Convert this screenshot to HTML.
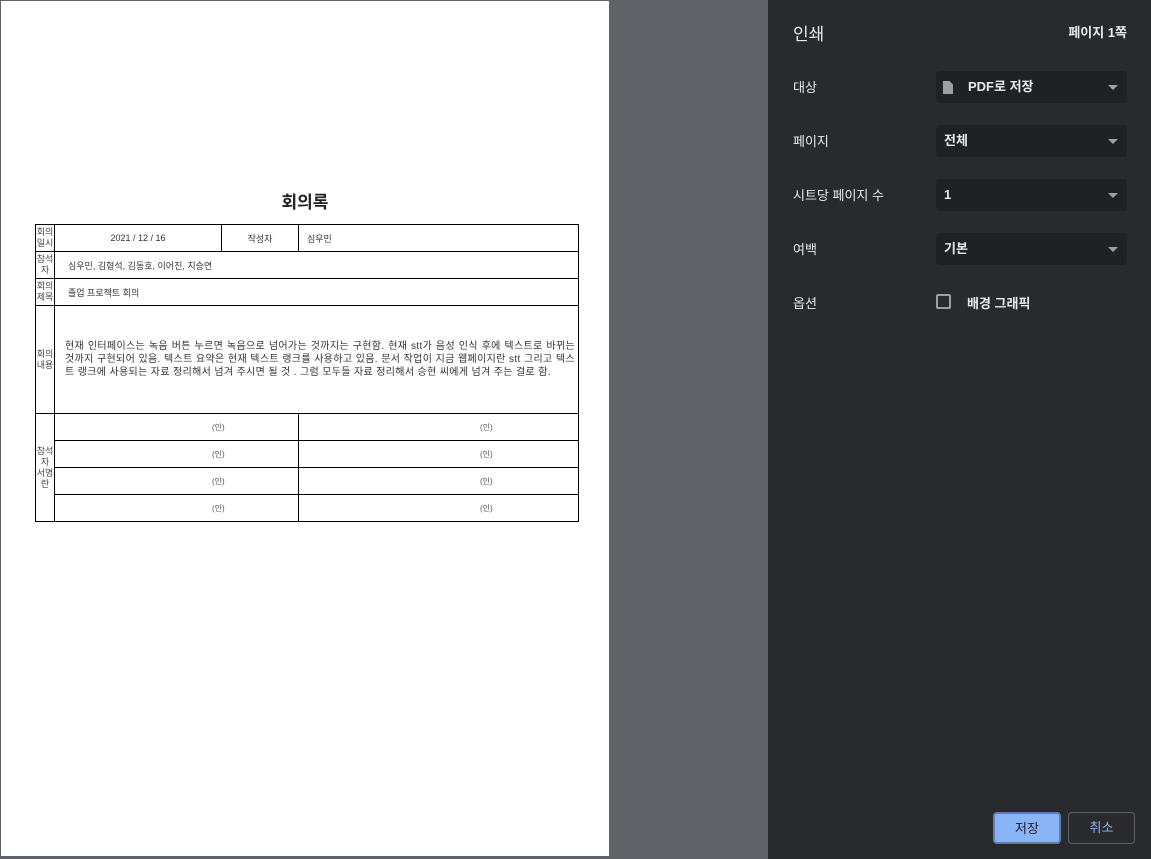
<!DOCTYPE html>
<html><head><meta charset="utf-8"><style>
*{margin:0;padding:0;box-sizing:border-box}
body{width:1151px;height:859px;overflow:hidden;background:#5f6368;position:relative;font-family:"Liberation Sans","Noto Sans CJK KR",sans-serif}
#page{position:absolute;left:1px;top:1px;width:608px;height:855px;background:#fff}
.t{position:absolute;left:0;width:100%;text-align:center;top:187px;font-size:17px;font-weight:bold;color:#222}
.c{position:absolute;border:1px solid #000;font-size:9px;color:#333;display:flex;align-items:center}
.l{justify-content:center;text-align:center;line-height:11px;font-size:9px;color:#444}
#panel{position:absolute;left:768px;top:0;width:383px;height:859px;background:#292a2d;color:#e8eaed;font-size:13px}
.lab{position:absolute;left:25px}
.sel{position:absolute;left:168px;width:191px;height:32px;background:#202124;border-radius:4px;padding-left:8px;line-height:32px;font-weight:bold}
.sel:after{content:"";position:absolute;right:9px;top:14px;border:5px solid transparent;border-top:5px solid #9aa0a6;border-bottom:0}
.btn{position:absolute;top:812px;height:32px;border-radius:4px;text-align:center;line-height:30px;font-size:13px}
.s{color:#555;font-size:8px}
</style></head><body>
<div id="page">
<div class="t">회의록</div>
<div class="c l" style="left:34px;top:223px;width:20px;height:28px">회의<br>일시</div>
<div class="c" style="left:53px;top:223px;width:168px;height:28px;justify-content:center">2021 / 12 / 16</div>
<div class="c" style="left:220px;top:223px;width:78px;height:28px;justify-content:center">작성자</div>
<div class="c" style="left:297px;top:223px;width:281px;height:28px;padding-left:8px">심우민</div>
<div class="c l" style="left:34px;top:250px;width:20px;height:28px">참석<br>자</div>
<div class="c" style="left:53px;top:250px;width:525px;height:28px;padding-left:13px">심우민, 김형석, 김동호, 이어진, 지승연</div>
<div class="c l" style="left:34px;top:277px;width:20px;height:28px">회의<br>제목</div>
<div class="c" style="left:53px;top:277px;width:525px;height:28px;padding-left:13px">졸업 프로젝트 회의</div>
<div class="c l" style="left:34px;top:304px;width:20px;height:109px">회의<br>내용</div>
<div class="c" style="left:53px;top:304px;width:525px;height:109px;padding:0 3px 0 10px;line-height:13px;text-align:justify;font-size:10px;letter-spacing:0.35px">현재 인터페이스는 녹음 버튼 누르면 녹음으로 넘어가는 것까지는 구현함. 현재 stt가 음성 인식 후에 텍스트로 바뀌는 것까지 구현되어 있음. 텍스트 요약은 현재 텍스트 랭크를 사용하고 있음. 문서 작업이 지금 웹페이지란 stt 그리고 텍스트 랭크에 사용되는 자료 정리해서 넘겨 주시면 될 것 . 그럼 모두들 자료 정리해서 승현 씨에게 넘겨 주는 걸로 함.</div>
<div class="c l" style="left:34px;top:412px;width:20px;height:109px">참석<br>자<br>서명<br>란</div>
<div class="c s" style="left:53px;top:412px;width:245px;height:28px;padding-left:157px">(인)</div>
<div class="c s" style="left:297px;top:412px;width:281px;height:28px;padding-left:181px">(인)</div>
<div class="c s" style="left:53px;top:439px;width:245px;height:28px;padding-left:157px">(인)</div>
<div class="c s" style="left:297px;top:439px;width:281px;height:28px;padding-left:181px">(인)</div>
<div class="c s" style="left:53px;top:466px;width:245px;height:28px;padding-left:157px">(인)</div>
<div class="c s" style="left:297px;top:466px;width:281px;height:28px;padding-left:181px">(인)</div>
<div class="c s" style="left:53px;top:493px;width:245px;height:28px;padding-left:157px">(인)</div>
<div class="c s" style="left:297px;top:493px;width:281px;height:28px;padding-left:181px">(인)</div>
</div>
<div id="panel">
<div class="lab" style="top:20px;font-size:17px">인쇄</div>
<div style="position:absolute;right:24px;top:22px;font-size:13px;font-weight:bold">페이지 1쪽</div>
<div class="lab" style="top:77px">대상</div>
<div class="sel" style="top:71px;padding-left:32px"><svg style="position:absolute;left:6px;top:9px" width="12" height="15" viewBox="0 0 12 15"><path d="M1 1h6.5l3.5 3.5V14H1z" fill="#9aa0a6"/></svg>PDF로 저장</div>
<div class="lab" style="top:131px">페이지</div>
<div class="sel" style="top:125px">전체</div>
<div class="lab" style="top:185px">시트당 페이지 수</div>
<div class="sel" style="top:179px">1</div>
<div class="lab" style="top:239px">여백</div>
<div class="sel" style="top:233px">기본</div>
<div class="lab" style="top:293px">옵션</div>
<div style="position:absolute;left:168px;top:294px;width:15px;height:15px;border:2px solid #9aa0a6;border-radius:2px"></div>
<div style="position:absolute;left:199px;top:293px;font-weight:bold">배경 그래픽</div>
<div class="btn" style="left:225px;width:68px;background:#8ab4f8;color:#202124;border:2px solid #5f7fb0">저장</div>
<div class="btn" style="left:300px;width:67px;border:1px solid #5f6368;color:#8ab4f8">취소</div>
</div>
</body></html>
